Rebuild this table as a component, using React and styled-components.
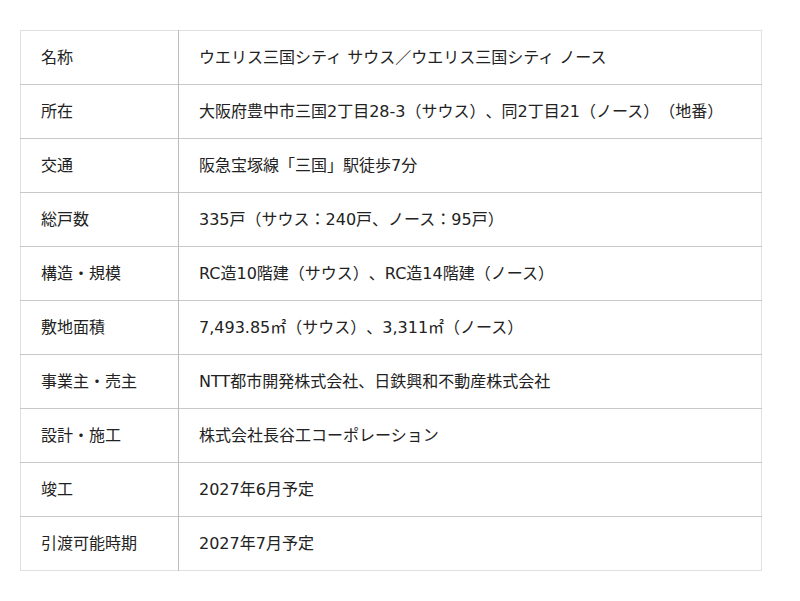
import styled, { createGlobalStyle } from 'styled-components';

const GlobalStyle = createGlobalStyle`
  body {
    margin: 0;
    background: #fff;
    font-family: "DejaVu Sans", "Noto Sans CJK JP", sans-serif;
  }
`;

const Page = styled.div`
  padding: 30px 0 0 20px;
`;

const Table = styled.table`
  width: 742px;
  border-collapse: collapse;
  border: 1px solid #e0e0e0;
  font-size: 16px;
  color: #222;
  text-spacing-trim: space-all;
`;

const Row = styled.tr`
  height: 54px;
  border-bottom: 1px solid #c8c8c8;

  &:last-child {
    border-bottom: 1px solid #e0e0e0;
  }
`;

const Head = styled.th`
  width: 158px;
  box-sizing: border-box;
  padding: 0 0 4px 20px;
  text-align: left;
  font-weight: normal;
  border-right: 1px solid #bdbdbd;
`;

const Cell = styled.td`
  padding: 0 0 4px 20px;
`;

const rows = [
  ['名称', 'ウエリス三国シティ サウス／ウエリス三国シティ ノース'],
  ['所在', '大阪府豊中市三国2丁目28-3（サウス）、同2丁目21（ノース）（地番）'],
  ['交通', '阪急宝塚線「三国」駅徒歩7分'],
  ['総戸数', '335戸（サウス：240戸、ノース：95戸）'],
  ['構造・規模', 'RC造10階建（サウス）、RC造14階建（ノース）'],
  ['敷地面積', '7,493.85㎡（サウス）、3,311㎡（ノース）'],
  ['事業主・売主', 'NTT都市開発株式会社、日鉄興和不動産株式会社'],
  ['設計・施工', '株式会社長谷工コーポレーション'],
  ['竣工', '2027年6月予定'],
  ['引渡可能時期', '2027年7月予定'],
];

export default function App() {
  return (
    <Page>
      <GlobalStyle />
      <Table>
        <tbody>
          {rows.map(([label, value]) => (
            <Row key={label}>
              <Head>{label}</Head>
              <Cell>{value}</Cell>
            </Row>
          ))}
        </tbody>
      </Table>
    </Page>
  );
}
